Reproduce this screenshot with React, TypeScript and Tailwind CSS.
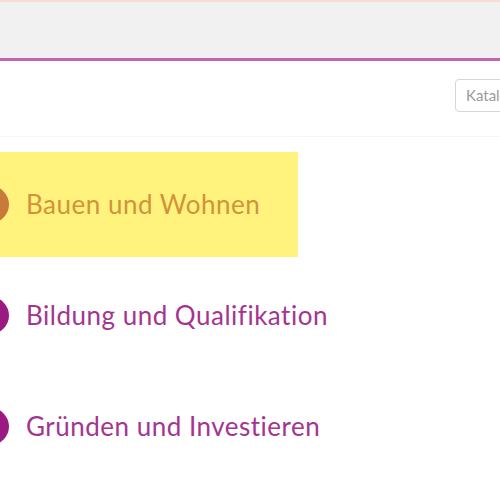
const categories = [
  { label: 'Bauen und Wohnen', active: true },
  { label: 'Bildung und Qualifikation', active: false },
  { label: 'Gründen und Investieren', active: false },
]

export default function App() {
  return (
    <div className="h-[500px] w-[500px] overflow-hidden bg-white font-['Lato',sans-serif]">
      <div className="h-[2px] bg-[#f6ddd3]" />
      <div className="h-[56px] bg-[#f1f1f1]" />
      <div className="h-[3px] bg-[#c464ae]" />
      <div className="flex h-[76px] items-center justify-end border-b border-[#f2f6f6] pb-[6px]">
        <div className="ml-auto mr-[-60px] flex h-[33px] w-[105px] items-center rounded-[4px] border border-[#d6d6d6] px-[10px] text-[15px] text-[#9a9a9a]">
          Katalog
        </div>
      </div>
      <div className="flex flex-col pt-[15px]">
        {categories.map(c => (
          <div
            key={c.label}
            className={`mb-[6px] flex h-[105px] w-[298px] items-center gap-[17px] ${c.active ? 'bg-[#fff27d]' : ''}`}
          >
            <div
              className={`ml-[-28px] h-[37px] w-[37px] shrink-0 rounded-full ${c.active ? 'bg-[#c97a3a]' : 'bg-[#9b1a82]'}`}
            />
            <span
              className={`whitespace-nowrap text-[26px] tracking-[0.5px] ${c.active ? 'text-[#d2923c]' : 'text-[#a4358f]'}`}
            >
              {c.label}
            </span>
          </div>
        ))}
      </div>
    </div>
  )
}
